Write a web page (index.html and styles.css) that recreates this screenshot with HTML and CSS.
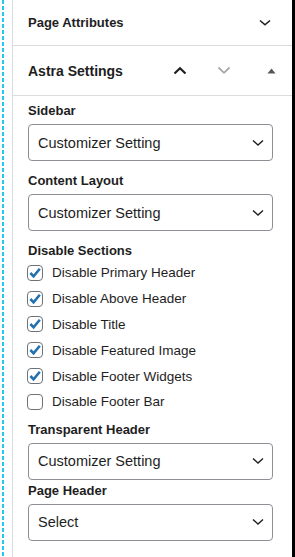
FILE: index.html
```html
<!DOCTYPE html>
<html>
<head>
<meta charset="utf-8">
<link rel="stylesheet" href="styles.css">
</head>
<body>
<div class="frame">
  <div class="guide"></div>
  <div class="panel">
    <div class="row row-attrs">
      <span class="row-title">Page Attributes</span>
      <svg class="ico-attrs" width="12" height="8" viewBox="0 0 12 8"><path d="M1 1.5 L6 5.8 L11 1.5" fill="none" stroke="#1e1e1e" stroke-width="1.6"/></svg>
    </div>
    <div class="row row-astra">
      <span class="row-title big">Astra Settings</span>
      <div class="ctrls">
        <svg class="ico" width="14" height="9" viewBox="0 0 14 9"><path d="M1.5 7.5 L7 2.2 L12.5 7.5" fill="none" stroke="#1e1e1e" stroke-width="2.2"/></svg>
        <svg class="ico" width="14" height="9" viewBox="0 0 14 9"><path d="M1.5 1.5 L7 6.8 L12.5 1.5" fill="none" stroke="#a7aaad" stroke-width="1.8"/></svg>
        <svg class="ico tri" width="9" height="6" viewBox="0 0 9 6"><path d="M0.5 5.5 L4.5 0.5 L8.5 5.5 Z" fill="#50575e"/></svg>
      </div>
    </div>
    <div class="body">
      <div class="field">
        <div class="label">Sidebar</div>
        <div class="select"><span>Customizer Setting</span><svg width="12" height="8" viewBox="0 0 12 8"><path d="M1 1.5 L6 6 L11 1.5" fill="none" stroke="#1e1e1e" stroke-width="1.4"/></svg></div>
      </div>
      <div class="field">
        <div class="label">Content Layout</div>
        <div class="select"><span>Customizer Setting</span><svg width="12" height="8" viewBox="0 0 12 8"><path d="M1 1.5 L6 6 L11 1.5" fill="none" stroke="#1e1e1e" stroke-width="1.4"/></svg></div>
      </div>
      <div class="field checks">
        <div class="label">Disable Sections</div>
        <label class="check"><span class="box on"><svg width="14" height="14" viewBox="0 0 14 14"><path d="M2.4 7 L5.6 10.4 L11.8 2.8" fill="none" stroke="#2271b1" stroke-width="2.6"/></svg></span>Disable Primary Header</label>
        <label class="check"><span class="box on"><svg width="14" height="14" viewBox="0 0 14 14"><path d="M2.4 7 L5.6 10.4 L11.8 2.8" fill="none" stroke="#2271b1" stroke-width="2.6"/></svg></span>Disable Above Header</label>
        <label class="check"><span class="box on"><svg width="14" height="14" viewBox="0 0 14 14"><path d="M2.4 7 L5.6 10.4 L11.8 2.8" fill="none" stroke="#2271b1" stroke-width="2.6"/></svg></span>Disable Title</label>
        <label class="check"><span class="box on"><svg width="14" height="14" viewBox="0 0 14 14"><path d="M2.4 7 L5.6 10.4 L11.8 2.8" fill="none" stroke="#2271b1" stroke-width="2.6"/></svg></span>Disable Featured Image</label>
        <label class="check"><span class="box on"><svg width="14" height="14" viewBox="0 0 14 14"><path d="M2.4 7 L5.6 10.4 L11.8 2.8" fill="none" stroke="#2271b1" stroke-width="2.6"/></svg></span>Disable Footer Widgets</label>
        <label class="check"><span class="box"></span>Disable Footer Bar</label>
      </div>
      <div class="field">
        <div class="label">Transparent Header</div>
        <div class="select"><span>Customizer Setting</span><svg width="12" height="8" viewBox="0 0 12 8"><path d="M1 1.5 L6 6 L11 1.5" fill="none" stroke="#1e1e1e" stroke-width="1.4"/></svg></div>
      </div>
      <div class="field tight">
        <div class="label">Page Header</div>
        <div class="select"><span>Select</span><svg width="12" height="8" viewBox="0 0 12 8"><path d="M1 1.5 L6 6 L11 1.5" fill="none" stroke="#1e1e1e" stroke-width="1.4"/></svg></div>
      </div>
    </div>
  </div>
  <div class="edge"></div>
</div>
</body>
</html>
```

FILE: styles.css
```css
html, body {
  margin: 0;
  padding: 0;
  background: #fff;
}
body {
  font-family: "Liberation Sans", Arial, sans-serif;
  color: #1e1e1e;
}
.frame {
  display: flex;
  width: 295px;
  height: 557px;
  overflow: hidden;
}
.guide {
  width: 2px;
  margin-left: 2px;
  margin-right: 8px;
  background: repeating-linear-gradient(to bottom, #1ec8f0 0 4px, transparent 4px 6px);
}
.panel {
  flex: 1;
  border-left: 1px solid #dcdcde;
  display: flex;
  flex-direction: column;
}
.edge {
  width: 3px;
  background: #000;
}
.row {
  display: flex;
  align-items: center;
  border-bottom: 1px solid #dcdcde;
  padding-left: 15px;
}
.row-attrs {
  height: 45px;
  justify-content: space-between;
  padding-right: 21px;
}
.row-astra {
  height: 49px;
}
.row-title {
  font-weight: bold;
  font-size: 13px;
}
.row-title.big {
  font-size: 14px;
  flex: 1;
}
.ctrls {
  display: flex;
  align-items: center;
  gap: 30px;
  padding-right: 16px;
}
.ico {
  display: block;
}
.ico.tri {
  margin-left: 6px;
}
.body {
  padding: 7px 19px 0 15px;
  display: flex;
  flex-direction: column;
}
.field {
  display: flex;
  flex-direction: column;
  margin-bottom: 12px;
}
.field.checks {
  margin-bottom: 7px;
}
.label {
  font-weight: bold;
  font-size: 13px;
  line-height: 16px;
  margin-bottom: 5px;
}
.select {
  height: 35px;
  border: 1px solid #8c8f94;
  border-radius: 4px;
  display: flex;
  align-items: center;
  justify-content: space-between;
  padding: 0 8px 0 9px;
  font-size: 14.5px;
}
.select svg {
  display: block;
}
.check {
  display: flex;
  align-items: center;
  font-size: 13.5px;
  height: 25.8px;
  gap: 9px;
}
.checks .label {
  margin-bottom: 1px;
}
.box {
  width: 16px;
  height: 16px;
  box-sizing: border-box;
  border: 1px solid #6e7277;
  border-radius: 4px;
  display: flex;
  align-items: center;
  justify-content: center;
  margin-left: -1px;
}
.field.tight {
  margin-top: -9px;
}
```
